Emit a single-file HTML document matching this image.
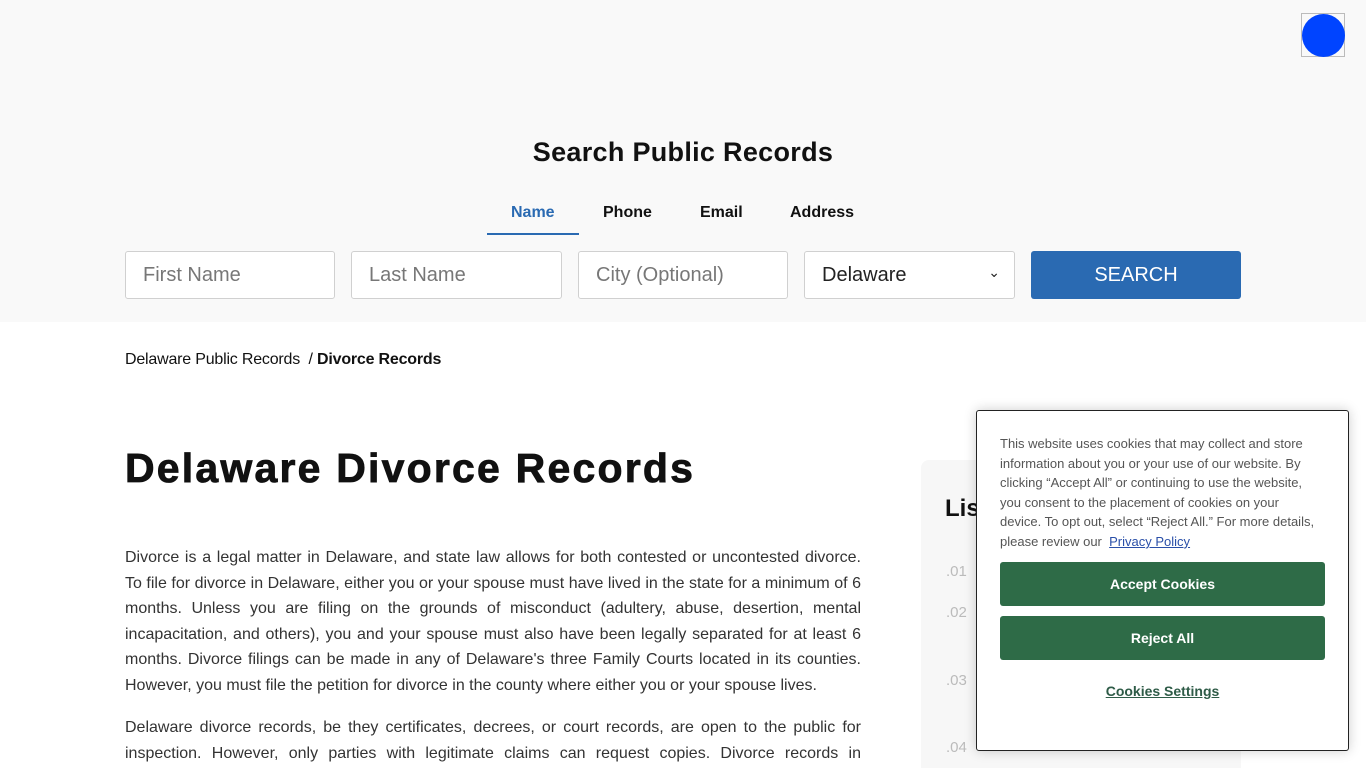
<!DOCTYPE html>
<html><head><meta charset="utf-8"><style>
*{box-sizing:border-box;margin:0;padding:0}
html,body{width:1366px;height:768px;overflow:hidden}
body{font-family:"Liberation Sans",Arial,sans-serif;background:#fff;position:relative;color:#111}
.top{position:absolute;left:0;top:0;width:1366px;height:322px;background:#f9f9f9}
h2{position:absolute;left:0;width:1366px;top:137px;text-align:center;font-size:27px;font-weight:bold;color:#111;letter-spacing:0.3px}
.tab{position:absolute;top:204px;font-size:16px;font-weight:bold}
.inp{position:absolute;top:251px;height:48px;border:1px solid #d0d0d0;border-radius:3px;background:#fff;font-size:20px;color:#777;padding:12px 17px}
.btn{position:absolute;left:1031px;top:251px;width:210px;height:48px;background:#2a6ab2;border-radius:3px;color:#fff;font-size:20px;text-align:center;line-height:48px}
.crumb{position:absolute;left:125px;top:351px;font-size:16px;letter-spacing:-0.2px}
h1{position:absolute;left:125px;top:445px;font-family:"Liberation Sans",Arial,sans-serif;font-size:41px;font-weight:900;letter-spacing:2.2px;-webkit-text-stroke:0.8px #111}
p{position:absolute;left:125px;width:736px;font-size:16px;line-height:25.6px;text-align:justify;color:#333}
.side{position:absolute;left:921px;top:460px;width:320px;height:320px;background:#f7f7f7;border-radius:8px}
.num{position:absolute;left:946px;font-size:15px;color:#bbb}
.ck{position:absolute;left:976px;top:410px;width:373px;height:341px;background:#fff;border:1px solid #222;border-radius:3px;box-shadow:0 0 12px rgba(0,0,0,.2)}
.ck .t{position:absolute;left:23px;top:23px;width:320px;font-size:13px;line-height:19.6px;color:#555}
.gb{position:absolute;left:23px;width:325px;height:44px;background:#2e6b47;border-radius:3px;color:#fff;font-weight:bold;font-size:14px;text-align:center;line-height:44px}
</style></head><body>
<div class="top"></div>
<div style="position:absolute;left:1301px;top:13px;width:44px;height:44px;border:1px solid #bbb"><div style="width:43px;height:43px;border-radius:50%;background:#0044ff"></div></div>
<h2>Search Public Records</h2>
<div class="tab" style="left:511px;color:#2a6ab2">Name</div>
<div style="position:absolute;left:487px;top:233px;width:92px;height:2px;background:#2a6ab2"></div>
<div class="tab" style="left:603px">Phone</div>
<div class="tab" style="left:700px">Email</div>
<div class="tab" style="left:790px">Address</div>
<div class="inp" style="left:125px;width:210px">First Name</div>
<div class="inp" style="left:351px;width:211px">Last Name</div>
<div class="inp" style="left:578px;width:210px">City (Optional)</div>
<div class="inp" style="left:804px;width:211px;color:#222">Delaware<span style="position:absolute;right:14px;top:12px;font-size:14px">&#8964;</span></div>
<div class="btn">SEARCH</div>
<div class="crumb">Delaware Public Records &nbsp;/&nbsp;<b>Divorce Records</b></div>
<h1>Delaware Divorce Records</h1>
<p style="top:545px">Divorce is a legal matter in Delaware, and state law allows for both contested or uncontested divorce. To file for divorce in Delaware, either you or your spouse must have lived in the state for a minimum of 6 months. Unless you are filing on the grounds of misconduct (adultery, abuse, desertion, mental incapacitation, and others), you and your spouse must also have been legally separated for at least 6 months. Divorce filings can be made in any of Delaware's three Family Courts located in its counties. However, you must file the petition for divorce in the county where either you or your spouse lives.</p>
<p style="top:715px">Delaware divorce records, be they certificates, decrees, or court records, are open to the public for inspection. However, only parties with legitimate claims can request copies. Divorce records in Delaware are maintained by the courts.</p>
<div class="side"></div>
<div style="position:absolute;left:945px;top:495px;font-size:24px;font-weight:bold">Lis</div>
<div class="num" style="top:563px">.01</div>
<div class="num" style="top:604px">.02</div>
<div class="num" style="top:672px">.03</div>
<div class="num" style="top:739px">.04</div>
<div class="ck">
<div class="t">This website uses cookies that may collect and store information about you or your use of our website. By clicking “Accept All” or continuing to use the website, you consent to the placement of cookies on your device. To opt out, select “Reject All.” For more details, please review our &nbsp;<span style="color:#2a4fa8;text-decoration:underline">Privacy Policy</span></div>
<div class="gb" style="top:151px">Accept Cookies</div>
<div class="gb" style="top:205px">Reject All</div>
<div style="position:absolute;left:0;width:371px;top:272px;text-align:center;font-size:14px;font-weight:bold;color:#2e5b47;text-decoration:underline">Cookies Settings</div>
</div>
</body></html>
